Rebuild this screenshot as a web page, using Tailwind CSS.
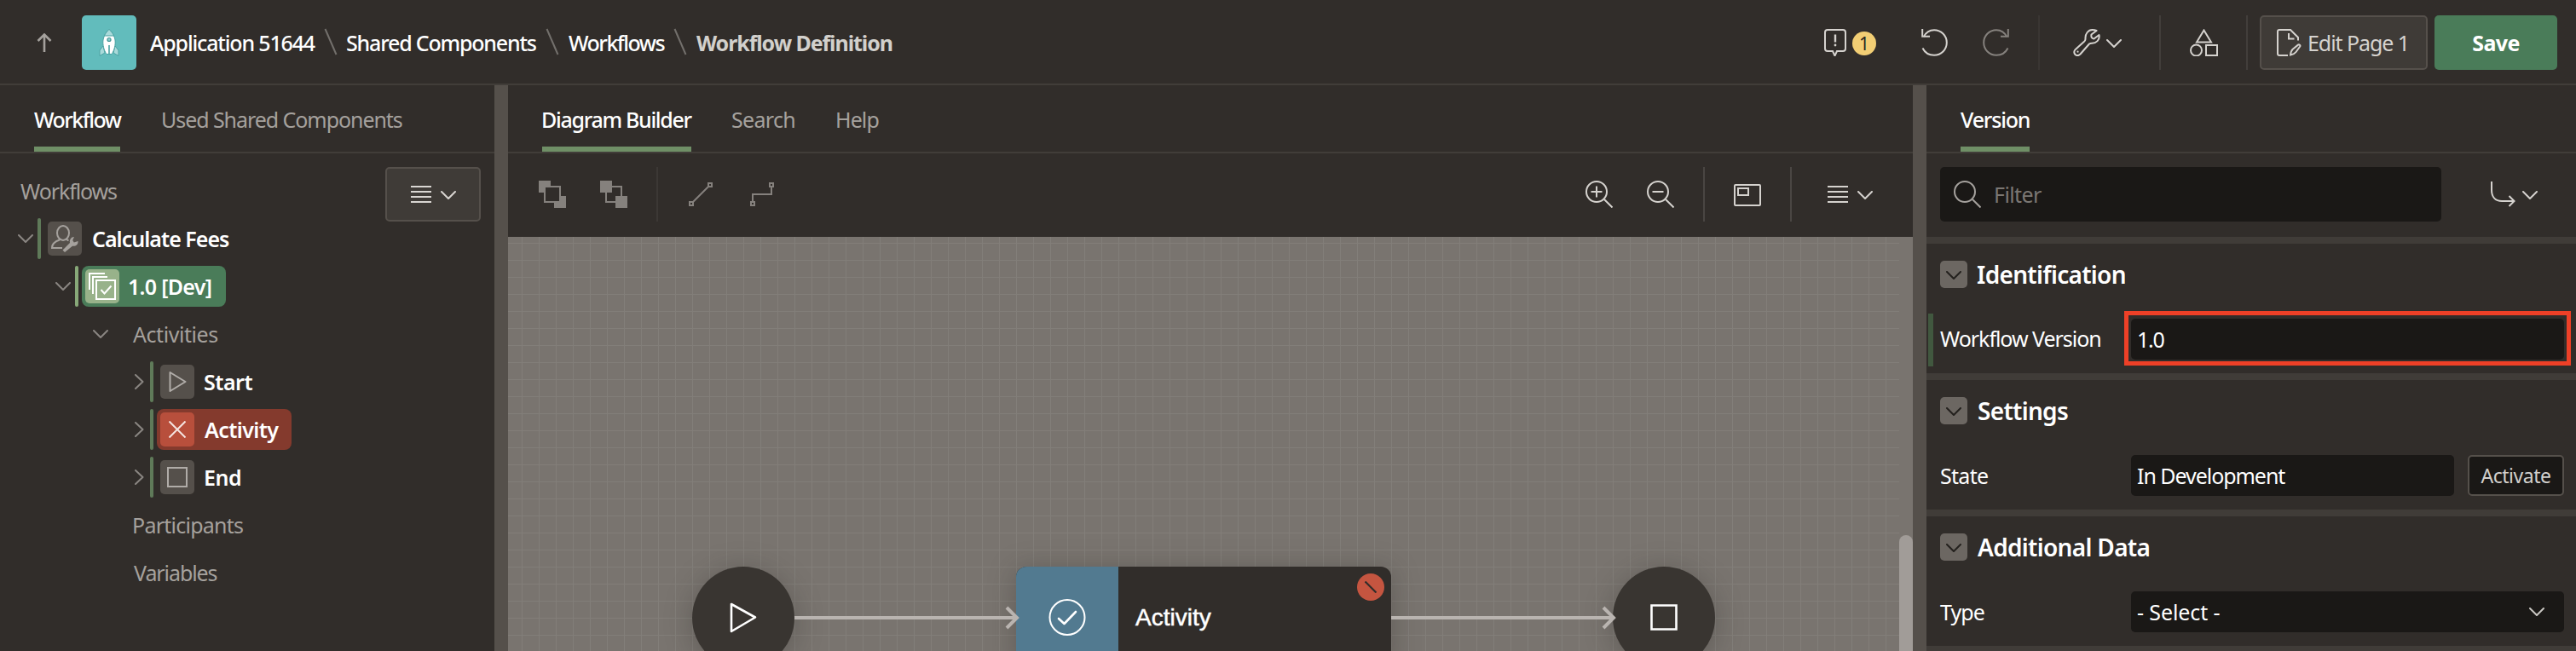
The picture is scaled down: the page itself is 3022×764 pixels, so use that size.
<!DOCTYPE html>
<html lang="en">
<head>
<meta charset="utf-8">
<title>Workflow Definition</title>
<script src="https://cdn.jsdelivr.net/npm/@tailwindcss/browser@4"></script>
</head>
<body class="w-[3022px] h-[764px] overflow-hidden bg-[#312d2a] text-white font-['Noto_Sans',sans-serif] text-[25px] leading-8 whitespace-nowrap flex flex-col">

<svg class="hidden">
  <symbol id="chev" viewBox="0 0 18 10"><path d="M1 1l8 8 8-8" fill="none" stroke="currentColor" stroke-width="2" stroke-linecap="round" stroke-linejoin="round"/></symbol>
  <symbol id="chevr" viewBox="0 0 11 18"><path d="M1 1l8.500 8L1 17" fill="none" stroke="currentColor" stroke-width="2" stroke-linecap="round" stroke-linejoin="round"/></symbol>
  <symbol id="lines" viewBox="0 0 24 20"><path d="M0 1h24M0 7h24M0 13h24M0 19h24" fill="none" stroke="currentColor" stroke-width="2"/></symbol>
  <symbol id="slash" viewBox="0 0 16 32"><path d="M1.500 1l13 30" fill="none" stroke="currentColor" stroke-width="2"/></symbol>
  <symbol id="undo" viewBox="0 0 32 32"><path d="M2.500 9.500C5 4.500 9.500 1.200 15 1.200a14.800 14.800 0 110 29.600C9 30.800 4 27.500 1.500 22.500M1.200 0v8.800H10" fill="none" stroke="currentColor" stroke-width="2"/></symbol>
</svg>

<!-- Header -->
<header class="h-[100px] shrink-0 border-b-2 border-[#413d39] flex items-center pr-[22px] pt-0.5">
  <svg class="ml-[43px] w-[18px] h-[23px] shrink-0 text-[#a5a19d]" viewBox="0 0 18 23"><path d="M9 22V2M1.500 9L9 1.500 16.500 9" fill="none" stroke="currentColor" stroke-width="2.600"/></svg>
  <div class="ml-[35px] w-16 h-16 rounded-[5px] bg-[#62bcbc] flex items-center justify-center shrink-0">
    <svg class="w-6 h-8" viewBox="0 0 24 32">
      <path d="M5 20L1 25v6.500l6-3.500zM19 20l4 5v6.500L17 28z" fill="#a9dada" stroke="#4aa3a3" stroke-width="1"/>
      <path d="M12 .5C8 4 5 9.500 4.800 15 4.700 21 7 27 9 29.500h6c2-2.500 4.300-8.500 4.200-14.500C19 9.500 16 4 12 .5z" fill="#fff" stroke="#4aa3a3" stroke-width="1"/>
      <path d="M12 .5C9.600 2.600 7.600 5.200 6.400 8h11.200C16.400 5.200 14.400 2.600 12 .5z" fill="#a9dada" stroke="#4aa3a3" stroke-width="1"/>
      <circle cx="12" cy="12.500" r="2" fill="#8fcfcf" stroke="#3f9494" stroke-width="1.200"/>
      <path d="M12 19v11" stroke="#4aa3a3" stroke-width="1.600"/>
    </svg>
  </div>
  <nav class="ml-4 flex items-center font-medium">
    <div class="w-[204px] tracking-[-1.160px]">Application 51644</div>
    <svg class="w-4 h-8 -mt-0.5 text-[#73706c]"><use href="#slash"/></svg>
    <div class="ml-2.5 w-[234px] tracking-[-1.200px]">Shared Components</div>
    <svg class="w-4 h-8 -mt-0.5 text-[#73706c]"><use href="#slash"/></svg>
    <div class="ml-[11px] w-[123px] tracking-[-1.500px]">Workflows</div>
    <svg class="w-4 h-8 -mt-0.5 text-[#73706c]"><use href="#slash"/></svg>
    <div class="ml-[11px] font-bold tracking-[-1.080px] text-[#d2d0cc]">Workflow Definition</div>
  </nav>
  <div class="ml-auto flex items-center text-[#d5d2ce]">
    <svg class="w-[26px] h-8 mr-[7px]" viewBox="0 0 26 32"><path d="M4 1h18a3 3 0 013 3v19a3 3 0 01-3 3h-7l-2.500 5.500L10 26H4a3 3 0 01-3-3V4a3 3 0 013-3z" fill="none" stroke="currentColor" stroke-width="2"/><path d="M13 6.500v9" stroke="currentColor" stroke-width="2.400"/><circle cx="13" cy="19" r="1.400" fill="currentColor"/></svg>
    <div class="size-7 mt-0.5 rounded-full bg-[#f2ce74] text-[#2a2622] text-[21px] leading-7 text-center">1</div>
    <svg class="ml-[53px] w-8 h-8"><use href="#undo"/></svg>
    <svg class="ml-[39px] w-8 h-8 -scale-x-100 text-[#85817d]"><use href="#undo"/></svg>
    <div class="ml-[34px] w-0.5 h-16 bg-[#3a3633]"></div>
    <svg class="ml-[39px] w-8 h-8" viewBox="0 0 32 32"><path d="M14.500 11.500C14 5.500 18 1 22.500 1c2 0 3.500.3 5 1l-6 4.500c-.6 3 .3 4.500 3 5l6-4.500c1.200 6-3.500 9.800-8.500 9.700-1.200 0-2 .1-3 .8L8.500 29.500c-2 2-4.500 1.800-6 .4-1.600-1.500-1.700-4.200.3-5.900L13.300 14.500c1-1 1.300-1.800 1.200-3z" fill="none" stroke="currentColor" stroke-width="2" stroke-linejoin="round"/><circle cx="5.500" cy="26.700" r="1.100" fill="currentColor"/></svg>
    <svg class="ml-[7px] mt-0.5 w-[18px] h-2.5"><use href="#chev"/></svg>
    <div class="ml-11 w-0.5 h-16 bg-[#423e3b]"></div>
    <svg class="ml-[34px] w-[33px] h-8" viewBox="0 0 33 32"><path d="M16.500 1.500L25 15.500H8zM19 19h13v12H19z" fill="none" stroke="currentColor" stroke-width="2"/><circle cx="7.500" cy="25" r="6.500" fill="none" stroke="currentColor" stroke-width="2"/></svg>
    <div class="ml-[33px] w-0.5 h-16 bg-[#423e3b]"></div>
    <button class="ml-3.5 w-[197px] h-16 rounded-[5px] border-2 border-[#55504b] bg-[#3f3b37] flex items-center pl-[18px]">
      <svg class="w-[29px] h-8" viewBox="0 0 29 32"><path d="M13 31H3a2 2 0 01-2-2V3a2 2 0 012-2h13l9 9v3.500M14 5v6.500h6.500M16 30.500c.3-3 1-5.300 2.700-6.800L25 18.600c1.200-1 3 .5 2.200 1.900L22.500 27c-1.400 1.900-3.500 3-6.500 3.500z" fill="none" stroke="currentColor" stroke-width="2"/></svg>
      <span class="ml-[7px] tracking-[-1.070px]">Edit Page 1</span>
    </button>
    <button class="ml-2 w-36 h-16 rounded-[5px] bg-[#4a7c59] text-white font-bold tracking-[-0.600px]">Save</button>
  </div>
</header>

<main class="flex-1 min-h-0 flex">
  <!-- Left: workflow tree -->
  <section class="w-[580px] shrink-0 flex flex-col">
    <div class="h-20 shrink-0 border-b-2 border-[#413d39] flex pl-10 gap-12">
      <div class="w-[101px] flex items-center border-b-6 border-[#6f8f66] pt-2 font-medium tracking-[-1.520px]">Workflow</div>
      <div class="flex items-center tracking-[-1.060px] text-[#a5a19d] pt-0.5">Used Shared Components</div>
    </div>
    <div class="relative flex flex-col pt-4">
      <button class="absolute left-[452px] top-4 w-28 h-16 rounded-[5px] border-2 border-[#55504b] bg-[#3f3b37] text-[#d9d6d2] flex items-center justify-center gap-[11px]">
        <svg class="w-6 h-5"><use href="#lines"/></svg>
        <svg class="w-[18px] h-2.5 mt-0.5"><use href="#chev"/></svg>
      </button>
      <div class="h-14 flex items-center pl-6 tracking-[-1.100px] text-[#a5a19d]">Workflows</div>
      <div class="h-14 flex items-center pl-[21px]">
        <svg class="w-[18px] h-2.5 text-[#8a8682]"><use href="#chev"/></svg>
        <div class="ml-[5px] w-1 h-12 rounded-sm bg-[#5f7a59]"></div>
        <div class="ml-2 w-10 h-10 rounded-[5px] bg-[#55504b] text-[#a5a19d] flex items-center justify-center">
          <svg class="w-8 h-8" viewBox="0 0 32 32"><ellipse cx="14" cy="9.500" rx="7" ry="8.500" fill="none" stroke="currentColor" stroke-width="2"/><path d="M10 17.500c-6 2-9 4.500-9 9.500h12M18 17l2.500 1.500" fill="none" stroke="currentColor" stroke-width="2"/><path d="M16 32l-2.500-2.500 8.500-8.500c-.8-3.500 1.500-7 5-7l-1.800 4 1.600 2.500 4.700-1.500c.5 4-3 6.500-6.500 5.700z" fill="currentColor"/></svg>
        </div>
        <div class="ml-3 font-semibold tracking-[-0.980px]">Calculate Fees</div>
      </div>
      <div class="h-14 flex items-center pl-[65px]">
        <svg class="w-[18px] h-2.5 text-[#8a8682]"><use href="#chev"/></svg>
        <div class="ml-[5px] w-1 h-12 rounded-sm bg-[#87a878]"></div>
        <div class="ml-1 w-[169px] h-12 rounded-lg bg-[#4a7c59] flex items-center pl-1">
          <div class="w-10 h-10 rounded-[5px] bg-[#98b28a] flex items-center justify-center">
            <svg class="w-8 h-8" viewBox="0 0 32 32"><path d="M9 9h22v22H9zM5 25V5h17M1 20V1h18M14.500 20l4 4.500 8-9" fill="none" stroke="#fff" stroke-width="2"/></svg>
          </div>
          <div class="ml-2.5 font-semibold tracking-[-0.700px]">1.0 [Dev]</div>
        </div>
      </div>
      <div class="h-14 flex items-center pl-[109px]">
        <svg class="w-[18px] h-2.5 text-[#8a8682]"><use href="#chev"/></svg>
        <div class="ml-[29px] tracking-[-0.450px] text-[#a5a19d]">Activities</div>
      </div>
      <div class="h-14 flex items-center pl-[158px]">
        <svg class="w-[11px] h-[18px] text-[#8a8682]"><use href="#chevr"/></svg>
        <div class="ml-[7px] w-1 h-12 rounded-sm bg-[#5f7a59]"></div>
        <div class="ml-2 w-10 h-10 rounded-[5px] bg-[#55504b] flex items-center justify-center">
          <svg class="w-6 h-6" viewBox="0 0 24 24"><path d="M3.500 1l18 11-18 11z" fill="none" stroke="#b0aca8" stroke-width="2" stroke-linejoin="round"/></svg>
        </div>
        <div class="ml-[11px] font-semibold tracking-[-0.500px]">Start</div>
      </div>
      <div class="h-14 flex items-center pl-[158px]">
        <svg class="w-[11px] h-[18px] text-[#8a8682]"><use href="#chevr"/></svg>
        <div class="ml-[7px] w-1 h-12 rounded-sm bg-[#5f7a59]"></div>
        <div class="ml-1 w-[158px] h-12 rounded-lg bg-[#843a2d] flex items-center pl-1">
          <div class="w-10 h-10 rounded-[5px] bg-[#b84f3c] flex items-center justify-center">
            <svg class="w-5 h-5" viewBox="0 0 20 20"><path d="M.5.5l19 19M19.500.5l-19 19" fill="none" stroke="#fff" stroke-opacity=".85" stroke-width="2"/></svg>
          </div>
          <div class="ml-3 font-semibold tracking-[-0.600px]">Activity</div>
        </div>
      </div>
      <div class="h-14 flex items-center pl-[158px]">
        <svg class="w-[11px] h-[18px] text-[#8a8682]"><use href="#chevr"/></svg>
        <div class="ml-[7px] w-1 h-12 rounded-sm bg-[#5f7a59]"></div>
        <div class="ml-2 w-10 h-10 rounded-[5px] bg-[#55504b] flex items-center justify-center">
          <div class="size-6 border-2 border-[#b0aca8]"></div>
        </div>
        <div class="ml-[11px] font-semibold tracking-[-0.400px]">End</div>
      </div>
      <div class="h-14 flex items-center pl-[155px] tracking-[-0.750px] text-[#a5a19d]">Participants</div>
      <div class="h-14 flex items-center pl-[157px] tracking-[-1.080px] text-[#a5a19d]">Variables</div>
    </div>
  </section>

  <div class="w-4 shrink-0 bg-[#55504b]"></div>

  <!-- Center: diagram builder -->
  <section class="w-[1648px] shrink-0 flex flex-col">
    <div class="h-20 shrink-0 border-b-2 border-[#413d39] flex pl-10">
      <div class="w-[175px] flex items-center border-b-6 border-[#6f8f66] pt-2 font-medium tracking-[-1.300px]"><span class="-ml-px">Diagram Builder</span></div>
      <div class="ml-[47px] w-[122px] flex items-center pt-0.5 tracking-[-0.700px] text-[#a5a19d]">Search</div>
      <div class="flex items-center pt-0.5 tracking-[-0.900px] text-[#a5a19d]">Help</div>
    </div>
    <div class="h-[98px] shrink-0 flex items-center pl-9 pb-0.5 text-[#d5d2ce]">
      <svg class="w-8 h-8" viewBox="0 0 32 32"><path d="M0 0h14v14H0zM18 18h14v14H18z" fill="#85817d"/><path d="M7 7h18v18H7z" fill="#312d2a" stroke="#85817d" stroke-width="2"/></svg>
      <svg class="ml-10 w-8 h-8" viewBox="0 0 32 32"><path d="M7 7h18v18H7z" fill="none" stroke="#85817d" stroke-width="2"/><path d="M0 0h14v14H0zM18 18h14v14H18z" fill="#85817d"/></svg>
      <div class="ml-[34px] w-0.5 h-16 bg-[#3c3835]"></div>
      <svg class="ml-9 w-7 h-7 text-[#85817d]" viewBox="0 0 28 28"><path d="M1 23h4v4H1zM23 1h4v4h-4zM5 23L23 5" fill="none" stroke="currentColor" stroke-width="2"/></svg>
      <svg class="ml-11 w-7 h-7 text-[#85817d]" viewBox="0 0 28 28"><path d="M1 23h4v4H1zM23 1h4v4h-4zM3 23v-9h22V5" fill="none" stroke="currentColor" stroke-width="2"/></svg>
      <svg class="ml-auto w-8 h-8" viewBox="0 0 32 32"><circle cx="13" cy="13" r="12" fill="none" stroke="currentColor" stroke-width="2"/><path d="M22 22l9.500 9.500M6.500 13h13M13 6.500v13" stroke="currentColor" stroke-width="2"/></svg>
      <svg class="ml-10 w-8 h-8" viewBox="0 0 32 32"><circle cx="13" cy="13" r="12" fill="none" stroke="currentColor" stroke-width="2"/><path d="M22 22l9.500 9.500M6.500 13h13" stroke="currentColor" stroke-width="2"/></svg>
      <div class="ml-[34px] w-0.5 h-16 bg-[#4a4643]"></div>
      <svg class="ml-[34px] mt-0.5 w-8 h-[26px]" viewBox="0 0 32 26"><rect x="1" y="1" width="30" height="24" rx="1" fill="none" stroke="currentColor" stroke-width="2"/><path d="M5 5h12v8H5z" fill="none" stroke="currentColor" stroke-width="2"/></svg>
      <div class="ml-[34px] w-0.5 h-16 bg-[#4a4643]"></div>
      <svg class="ml-[42px] w-6 h-5"><use href="#lines"/></svg>
      <svg class="ml-[11px] mr-[47px] mt-0.5 w-[18px] h-2.5"><use href="#chev"/></svg>
    </div>
    <div class="relative flex-1 overflow-hidden bg-[#79746f]">
      <div class="absolute inset-y-0 left-0 w-[1632px] bg-[linear-gradient(to_right,#827e79_1px,transparent_1px),linear-gradient(to_bottom,#827e79_1px,transparent_1px)] bg-[size:20px_20px] bg-[position:16px_7px]"></div>
      <div class="absolute left-[216px] top-[387px] w-[120px] h-[120px] rounded-full bg-[#393531] shadow-[0_4px_32px_rgba(49,45,42,0.35)]"></div>
      <div class="absolute left-[1296px] top-[387px] w-[120px] h-[120px] rounded-full bg-[#393531] shadow-[0_4px_32px_rgba(49,45,42,0.35)]"></div>
      <div class="absolute left-[596px] top-[387px] w-[440px] h-[120px] rounded-xl overflow-hidden bg-[#312d2a] shadow-[0_4px_32px_rgba(49,45,42,0.35)] flex items-center">
        <div class="w-[120px] h-full bg-[#527a90] flex items-center justify-center">
          <svg class="w-11 h-11" viewBox="0 0 44 44"><circle cx="22" cy="21.500" r="20.500" fill="none" stroke="#fff" stroke-width="2"/><path d="M12 23l6.500 6L32 15" fill="none" stroke="#fff" stroke-width="2.600" stroke-linecap="round" stroke-linejoin="round"/></svg>
        </div>
        <div class="ml-5 text-[28px] font-['Liberation_Sans',sans-serif] [-webkit-text-stroke:0.5px_#fff]">Activity</div>
        <div class="absolute right-2 top-2 size-8 rounded-full bg-[#c55540] flex items-center justify-center">
          <svg class="w-3.5 h-3.5" viewBox="0 0 14 14"><path d="M.5.500l13 13" stroke="#312d2a" stroke-width="2.200"/></svg>
        </div>
      </div>
      <svg class="absolute left-[216px] top-[387px] w-[1200px] h-[120px]" viewBox="0 0 1200 120">
        <path d="M120 60h260M820 60h260" stroke="#b9b4b0" stroke-width="4"/>
        <path d="M369 48l12 12-12 12M1069 48l12 12-12 12" fill="none" stroke="#b9b4b0" stroke-width="4"/>
        <path d="M46 44v32l28-16.500z" fill="none" stroke="#fff" stroke-width="2.600" stroke-linejoin="round"/>
        <path d="M1125.500 45.500h29v28h-29z" fill="none" stroke="#fff" stroke-width="2.600"/>
      </svg>
      <div class="absolute right-0 top-[350px] w-4 h-[200px] rounded-full bg-[#a19c98]"></div>
    </div>
  </section>

  <div class="w-4 shrink-0 bg-[#55504b]"></div>

  <!-- Right: property editor -->
  <section class="flex-1 min-w-0 flex flex-col">
    <div class="h-20 shrink-0 border-b-2 border-[#413d39] flex pl-10">
      <div class="w-[81px] flex items-center border-b-6 border-[#6f8f66] pt-2 font-medium tracking-[-1.200px]">Version</div>
    </div>
    <div class="h-[98px] shrink-0 flex items-center pl-4 pr-[45px] pb-0.5 text-[#d5d2ce]">
      <div class="w-[588px] h-16 rounded-[5px] bg-[#1a1816] flex items-center pl-4 text-[#7b7773]">
        <svg class="w-8 h-8 text-[#a5a19d]" viewBox="0 0 32 32"><circle cx="13" cy="13" r="12" fill="none" stroke="currentColor" stroke-width="2"/><path d="M22 22l9.500 9.500" stroke="currentColor" stroke-width="2"/></svg>
        <span class="ml-[15px] tracking-[-0.600px]">Filter</span>
      </div>
      <svg class="ml-auto w-[29px] h-[30px]" viewBox="0 0 29 30"><path d="M1 0v10c0 8 4.500 13 12 13h14M21.500 17l6 6-6 6" fill="none" stroke="currentColor" stroke-width="2"/></svg>
      <svg class="ml-2 mt-0.5 w-[18px] h-2.5"><use href="#chev"/></svg>
    </div>

    <div class="h-40 shrink-0 border-t-8 border-[#403c38] flex flex-col">
      <div class="h-[72px] flex items-center pl-4">
        <div class="size-8 rounded-[5px] bg-[#6c6762] text-[#24211e] flex items-center justify-center"><svg class="w-[18px] h-2.5 mt-0.5"><use href="#chev"/></svg></div>
        <div class="ml-[11px] text-[28px] font-semibold tracking-[-0.700px]">Identification</div>
      </div>
      <div class="h-20 pt-2 flex items-start">
        <div class="ml-0.5 mt-0.5 w-1.5 h-[62px] bg-[#41583f]"></div>
        <div class="ml-2 mt-[15px] w-[216px] tracking-[-1.040px]">Workflow Version</div>
        <div class="-mt-px w-[524px] h-16 border-5 border-[#ee4027] p-[3px] pt-1">
          <div class="w-[508px] h-12 rounded-[5px] bg-[#1a1816] flex items-center pl-[7px] tracking-[-1.200px]">1.0</div>
        </div>
      </div>
    </div>
    <div class="h-40 shrink-0 border-t-8 border-[#403c38] flex flex-col">
      <div class="h-[72px] flex items-center pl-4">
        <div class="size-8 rounded-[5px] bg-[#6c6762] text-[#24211e] flex items-center justify-center"><svg class="w-[18px] h-2.5 mt-0.5"><use href="#chev"/></svg></div>
        <div class="ml-3 text-[28px] font-semibold tracking-[-0.700px]">Settings</div>
      </div>
      <div class="h-20 flex items-center pl-4">
        <div class="w-[224px] tracking-[-0.700px]">State</div>
        <div class="w-[379px] h-12 rounded-[5px] bg-[#1a1816] flex items-center pl-[7px] tracking-[-1.050px]">In Development</div>
        <button class="ml-4 w-[113px] h-12 rounded-[5px] border-2 border-[#55504b] bg-[#1a1816] text-[#d2d0cc] text-[23px] tracking-[-0.500px]">Activate</button>
      </div>
    </div>
    <div class="h-40 shrink-0 border-t-8 border-[#403c38] flex flex-col">
      <div class="h-[72px] flex items-center pl-4">
        <div class="size-8 rounded-[5px] bg-[#6c6762] text-[#24211e] flex items-center justify-center"><svg class="w-[18px] h-2.5 mt-0.5"><use href="#chev"/></svg></div>
        <div class="ml-3 text-[28px] font-semibold tracking-[-0.680px]">Additional Data</div>
      </div>
      <div class="h-20 flex items-center pl-4">
        <div class="w-[224px] tracking-[-0.900px]">Type</div>
        <div class="w-[508px] h-12 rounded-[5px] bg-[#1a1816] flex items-center justify-between pl-[7px] pr-[23px]"><span class="tracking-[-0.100px]">- Select -</span><svg class="w-[18px] h-2.5 text-[#c9c6c2]"><use href="#chev"/></svg></div>
      </div>
    </div>
    <div class="h-2 shrink-0 bg-[#403c38]"></div>
  </section>
</main>
</body>
</html>
